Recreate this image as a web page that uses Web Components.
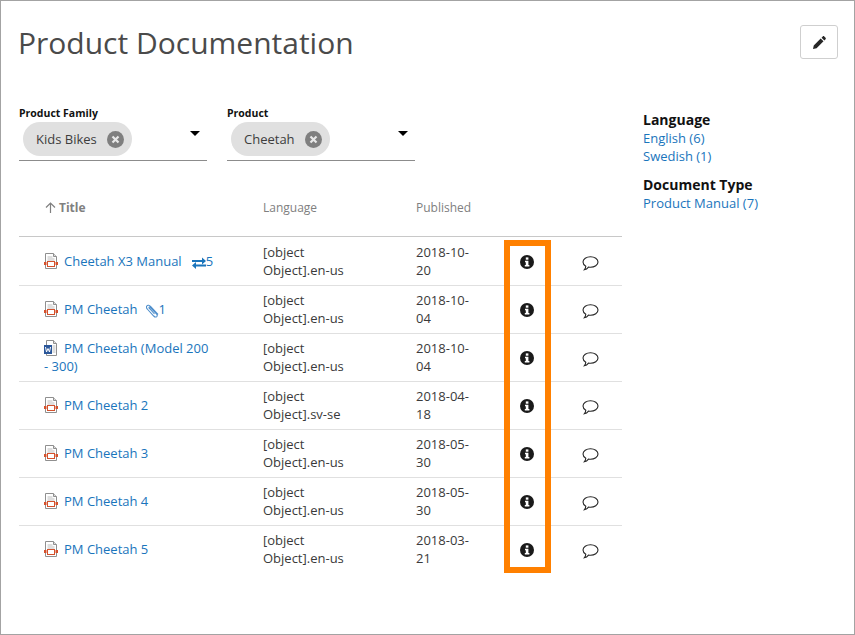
<!DOCTYPE html>
<html>
<head>
<meta charset="utf-8">
<title>Product Documentation</title>
<style>
  html, body { margin: 0; padding: 0; background: #fff; }
  body { font-family: "Open Sans", "Liberation Sans", sans-serif; }
</style>
</head>
<body>
<doc-page>
  <doc-filter slot="filters" label="Product Family" value="Kids Bikes"></doc-filter>
  <doc-filter slot="filters" label="Product" value="Cheetah"></doc-filter>
  <doc-table slot="table"></doc-table>
  <doc-facet slot="facets" heading="Language" items="English (6)|Swedish (1)"></doc-facet>
  <doc-facet slot="facets" heading="Document Type" items="Product Manual (7)"></doc-facet>
</doc-page>

<script>
const PDF_ICON = `<svg width="14" height="16" viewBox="0 0 14 16">
  <path d="M1.500 .5h8l3 3v12h-11z" fill="#fff" stroke="#8f8f8f"/>
  <path d="M9.500 .5v3h3" fill="#ddd" stroke="#8f8f8f"/>
  <path d="M3.500 4h5M3.500 6h7M3.500 8h7" stroke="#bdbdbd"/>
  <rect x="0" y="9" width="2.500" height="3" fill="#d4512c"/>
  <rect x="11.500" y="9" width="2.500" height="3" fill="#d4512c"/>
  <rect x="3.500" y="8.500" width="7" height="5" fill="#fff" stroke="#d4512c"/>
</svg>`;

const WORD_ICON = `<svg width="14" height="16" viewBox="0 0 14 16">
  <path d="M2.500 .5h7l3 3v12h-10z" fill="#fff" stroke="#8f8f8f"/>
  <path d="M9.500 .5v3h3" fill="#ddd" stroke="#8f8f8f"/>
  <path d="M8.500 6h3M8.500 8h3M8.500 10h3M8.500 12h3" stroke="#bdbdbd"/>
  <rect x="0" y="5" width="8" height="9" fill="#2a5699"/>
  <path d="M1.500 7l1 5 1.500-3.500 1.500 3.500 1-5" fill="none" stroke="#fff"/>
</svg>`;

const LINK_ICON = `<svg width="14" height="12" viewBox="0 0 14 12">
  <path d="M0 3h10V.5L14 4l-4 3.500V5H0z" fill="#1a75bc"/>
  <path d="M14 7.500H4V5L0 8.500 4 12V9.500h10z" fill="#1a75bc"/>
</svg>`;

const CLIP_ICON = `<svg width="13" height="15" viewBox="0 0 13 15">
  <path d="M12 11.500 4.500 3.500C3.300 2.200 1.700 1.800.9 2.800 0 3.800.5 5.200 1.700 6.500l6 6.500c1 1 2.200 1.300 3 .6.800-.8.500-2-.5-3L4.500 4.500c-.5-.5-1-.6-1.300-.3-.3.300-.2.800.3 1.300l5 5.500" fill="none" stroke="#4f8fcc" stroke-width="1.100"/>
</svg>`;

const INFO_ICON = `<svg width="14" height="14" viewBox="0 0 14 14">
  <circle cx="7" cy="7" r="7" fill="#1a1a1a"/>
  <rect x="5.800" y="2.400" width="2.600" height="2.300" fill="#fff"/>
  <path d="M5 5.800h3.400v4.300h1v1.500H4.800v-1.500h1V7.300H5z" fill="#fff"/>
</svg>`;

const COMMENT_ICON = `<svg width="17" height="15" viewBox="0 0 17 15">
  <path d="M8.500 .8C4.400 .8 1 3 1 6c0 1.700 1.100 3.200 2.800 4.200-.1 1.300-.6 2.500-1.500 3.600 1.700-.3 3.200-1.400 4.200-2.700.6.100 1.300.2 2 .2 4.100 0 7.500-2.300 7.500-5.300S12.600 .8 8.500 .8z" fill="#fff" stroke="#262626" stroke-width="1.100"/>
</svg>`;

const PENCIL_ICON = `<svg width="13" height="13" viewBox="0 0 12 12">
  <path d="M0 12l.7-3.300 6.400-6.400 2.600 2.600-6.400 6.400zM7.900 1.500 9 .4c.4-.4 1-.4 1.400 0l1.200 1.200c.4.400.4 1 0 1.400l-1.100 1.100z" fill="#262626"/>
</svg>`;

class DocPage extends HTMLElement {
  constructor() {
    super();
    this.attachShadow({ mode: 'open' });
    this.shadowRoot.innerHTML = `
      <style>
        :host {
          display: block;
          position: relative;
          box-sizing: border-box;
          width: 855px;
          height: 635px;
          border: 1px solid #a3a3a3;
          overflow: hidden;
        }
        header {
          display: flex;
          justify-content: space-between;
          padding: 24px 16px 0 17px;
        }
        h1 {
          margin: 0;
          font-size: 30px;
          line-height: 36px;
          font-weight: 400;
          color: #4a4a4a;
        }
        button {
          width: 38px;
          height: 34px;
          display: flex;
          align-items: center;
          justify-content: center;
          padding: 0;
          background: #fff;
          border: 1px solid #cfcfcf;
          border-radius: 3px;
        }
        .body {
          display: flex;
          margin-top: 45px;
          padding-left: 18px;
        }
        .main { width: 603px; }
        .filters { display: flex; gap: 20px; }
        .side {
          display: flex;
          flex-direction: column;
          gap: 10px;
          margin-left: 21px;
          padding-top: 4px;
        }
        .highlight {
          position: absolute;
          left: 503px;
          top: 239px;
          width: 47px;
          height: 333px;
          box-sizing: border-box;
          border: 6px solid #ff8000;
          pointer-events: none;
        }
      </style>
      <header>
        <h1>Product Documentation</h1>
        <button aria-label="Edit">${PENCIL_ICON}</button>
      </header>
      <div class="body">
        <div class="main">
          <div class="filters"><slot name="filters"></slot></div>
          <slot name="table"></slot>
        </div>
        <div class="side"><slot name="facets"></slot></div>
      </div>
      <div class="highlight"></div>
    `;
  }
}

class DocFilter extends HTMLElement {
  constructor() {
    super();
    this.attachShadow({ mode: 'open' });
  }

  connectedCallback() {
    this.shadowRoot.innerHTML = `
      <style>
        :host { display: block; width: 188px; }
        label {
          display: block;
          font-size: 10.5px;
          line-height: 15px;
          font-weight: 700;
          color: #111;
        }
        .box {
          display: flex;
          justify-content: space-between;
          padding: 1px 7px 4px 4px;
          border-bottom: 1px solid #8c8c8c;
        }
        .chip {
          display: flex;
          align-items: center;
          gap: 10px;
          height: 34px;
          padding: 0 8px 0 13px;
          border-radius: 17px;
          background: #e0e0e0;
          font-size: 13px;
          color: #3d3d3d;
        }
        .arrow {
          width: 0;
          height: 0;
          margin-top: 9px;
          border-left: 5px solid transparent;
          border-right: 5px solid transparent;
          border-top: 5px solid #000;
        }
        svg { display: block; }
      </style>
      <label>${this.getAttribute('label')}</label>
      <div class="box">
        <div class="chip">
          <span>${this.getAttribute('value')}</span>
          <svg width="17" height="17" viewBox="0 0 17 17">
            <circle cx="8.500" cy="8.500" r="8.500" fill="#7f7f7f"/>
            <path d="M5.500 5.500l6 6M11.500 5.500l-6 6" stroke="#e8e8e8" stroke-width="2.200"/>
          </svg>
        </div>
        <div class="arrow"></div>
      </div>
    `;
  }
}

class DocTable extends HTMLElement {
  constructor() {
    super();
    this.attachShadow({ mode: 'open' });

    this.rows = [
      { title: 'Cheetah X3 Manual', icon: PDF_ICON, lang: 'en-us', date: '2018-10-20', extra: 'links', count: 5 },
      { title: 'PM Cheetah', icon: PDF_ICON, lang: 'en-us', date: '2018-10-04', extra: 'clip', count: 1 },
      { title: 'PM Cheetah (Model 200 - 300)', icon: WORD_ICON, lang: 'en-us', date: '2018-10-04' },
      { title: 'PM Cheetah 2', icon: PDF_ICON, lang: 'sv-se', date: '2018-04-18' },
      { title: 'PM Cheetah 3', icon: PDF_ICON, lang: 'en-us', date: '2018-05-30' },
      { title: 'PM Cheetah 4', icon: PDF_ICON, lang: 'en-us', date: '2018-05-30' },
      { title: 'PM Cheetah 5', icon: PDF_ICON, lang: 'en-us', date: '2018-03-21' }
    ];

    this.render();
  }

  extra(row) {
    if (row.extra === 'links') return `<span class="extra links">${LINK_ICON}${row.count}</span>`;
    if (row.extra === 'clip') return `<span class="extra clip">${CLIP_ICON}${row.count}</span>`;
    return '';
  }

  render() {
    this.shadowRoot.innerHTML = `
      <style>
        :host { display: block; }
        .head, .row {
          display: grid;
          grid-template-columns: 244px 153px 88px 46px 72px;
          align-items: center;
          box-sizing: border-box;
        }
        .head {
          height: 76px;
          padding-top: 18px;
          font-size: 12px;
          color: #808080;
          border-bottom: 1px solid #c8c8c8;
        }
        .head .sort {
          display: flex;
          align-items: center;
          gap: 3px;
          padding-left: 26px;
          font-weight: 700;
        }
        .row {
          height: 48px;
          padding-bottom: 1px;
          border-bottom: 1px solid #e0e0e0;
          font-size: 13px;
          line-height: 18px;
          color: #3a3a3a;
        }
        .head + .row { height: 49px; padding-bottom: 0; }
        .row:last-child { border-bottom-color: transparent; }
        .title { padding: 0 48px 0 25px; color: #1a75bc; }
        .title > svg { vertical-align: -3px; margin-right: 6px; }
        .lang { width: 90px; }
        .date { width: 62px; }
        .info, .comment { display: flex; justify-content: center; }
        .info { padding-top: 2px; }
        .comment { padding: 4px 0 0 8px; }
        .extra { white-space: nowrap; }
        .links { margin-left: 10px; }
        .links svg { vertical-align: -3px; }
        .clip { margin-left: 9px; }
        .clip svg { vertical-align: -4px; margin-right: -1px; }
        .info svg, .comment svg { display: block; }
      </style>
      <div class="head">
        <div class="sort">
          <svg width="11" height="11" viewBox="0 0 11 11"><path d="M5.500 11V1M1 5.500l4.500-4.500 4.500 4.500" fill="none" stroke="#808080" stroke-width="1.200"/></svg>
          <span>Title</span>
        </div>
        <div>Language</div>
        <div>Published</div>
      </div>
      ${this.rows.map(row => `
        <div class="row">
          <div class="title">${row.icon}${row.title}${this.extra(row)}</div>
          <div class="lang">[object Object].${row.lang}</div>
          <div class="date">${row.date}</div>
          <div class="info">${INFO_ICON}</div>
          <div class="comment">${COMMENT_ICON}</div>
        </div>
      `).join('')}
    `;
  }
}

class DocFacet extends HTMLElement {
  constructor() {
    super();
    this.attachShadow({ mode: 'open' });
  }

  connectedCallback() {
    const items = this.getAttribute('items').split('|');
    this.shadowRoot.innerHTML = `
      <style>
        :host { display: block; }
        h3 {
          margin: 0;
          font-size: 14px;
          line-height: 19px;
          font-weight: 700;
          color: #111;
        }
        a {
          display: block;
          font-size: 13px;
          line-height: 18px;
          color: #1a75bc;
          text-decoration: none;
        }
      </style>
      <h3>${this.getAttribute('heading')}</h3>
      ${items.map(item => `<a href="#">${item}</a>`).join('')}
    `;
  }
}

customElements.define('doc-page', DocPage);
customElements.define('doc-filter', DocFilter);
customElements.define('doc-table', DocTable);
customElements.define('doc-facet', DocFacet);
</script>
</body>
</html>
